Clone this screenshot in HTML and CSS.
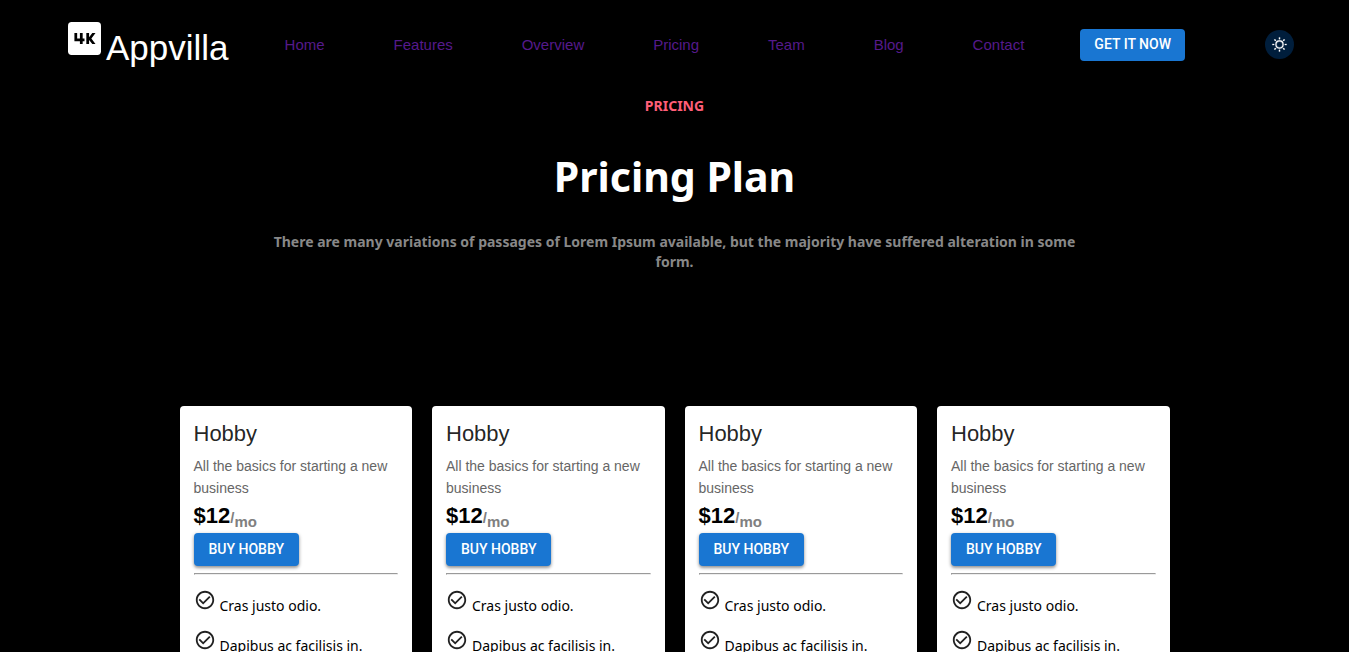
FILE: index.html
```html
<!DOCTYPE html>
<html lang="en">
<head>
<meta charset="utf-8">
<meta name="viewport" content="width=device-width, initial-scale=1">
<title>Appvilla - Pricing</title>
<link rel="stylesheet" href="styles.css">
</head>
<body>
<svg class="sprite" aria-hidden="true">
  <symbol id="check" viewBox="0 0 24 24">
    <path d="M16.59 7.58 10 14.17l-3.59-3.58L5 12l5 5 8-8zM12 2C6.48 2 2 6.48 2 12s4.48 10 10 10 10-4.480 10-10S17.520 2 12 2m0 18c-4.420 0-8-3.580-8-8s3.580-8 8-8 8 3.580 8 8-3.580 8-8 8"/>
  </symbol>
</svg>
<header class="topbar">
  <div class="brand">
    <svg class="brand-icon" viewBox="3 3 18 18" aria-hidden="true">
      <rect x="3" y="3" width="18" height="18" rx="2" fill="#fff"/>
      <path d="M12 13.500h-1V15H9.500v-1.500h-3V9H8v3h1.500V9H11v3h1zM18 15h-1.750l-1.750-2.250V15H13V9h1.500v2.250L16.250 9H18l-2.250 3z" fill="#000"/>
    </svg>
    <span class="brand-name">Appvilla</span>
  </div>
  <nav class="nav">
    <a href="#home">Home</a>
    <a href="#features">Features</a>
    <a href="#overview">Overview</a>
    <a href="#pricing">Pricing</a>
    <a href="#team">Team</a>
    <a href="#blog">Blog</a>
    <a href="#contact">Contact</a>
  </nav>
  <button class="button" type="button">GET IT NOW</button>
  <button class="theme-toggle" type="button" aria-label="Toggle theme">
    <svg viewBox="0 0 20 20" aria-hidden="true"><path fill="#fff" stroke="#fff" stroke-width=".3" d="M9.305 1.667V3.750h1.389V1.667h-1.390zm-4.707 1.950l-.982.982L5.090 6.072l.982-.982-1.473-1.473zm10.802 0L13.927 5.090l.982.982 1.473-1.473-.982-.982zM10 5.139a4.872 4.872 0 00-4.862 4.860A4.872 4.872 0 0010 14.862 4.872 4.872 0 0014.860 10 4.872 4.872 0 0010 5.139zm0 1.389A3.462 3.462 0 0113.471 10a3.462 3.462 0 01-3.473 3.472A3.462 3.462 0 016.527 10 3.462 3.462 0 0110 6.528zM1.665 9.305v1.390h2.083v-1.390H1.666zm14.583 0v1.390h2.084v-1.390h-2.084zM5.090 13.928L3.616 15.400l.982.982 1.473-1.473-.982-.982zm9.820 0l-.982.982 1.473 1.473.982-.982-1.473-1.473zM9.305 16.250v2.083h1.389V16.250h-1.390z"/></svg>
  </button>
</header>
<main>
  <section class="intro" id="pricing">
    <p class="eyebrow">PRICING</p>
    <h1 class="title">Pricing Plan</h1>
    <p class="lead">There are many variations of passages of Lorem Ipsum available, but the majority have suffered alteration in some form.</p>
  </section>
  <section class="plans">
    <article class="card">
      <h2 class="plan">Hobby</h2>
      <p class="about">All the basics for starting a new business</p>
      <p class="price">$12<span class="period">/<sub>mo</sub></span></p>
      <button class="button raised" type="button">BUY HOBBY</button>
      <hr class="rule">
      <ul class="features">
        <li><svg class="check"><use href="#check"/></svg><span>Cras justo odio.</span></li>
        <li><svg class="check"><use href="#check"/></svg><span>Dapibus ac facilisis in.</span></li>
      </ul>
    </article>
    <article class="card">
      <h2 class="plan">Hobby</h2>
      <p class="about">All the basics for starting a new business</p>
      <p class="price">$12<span class="period">/<sub>mo</sub></span></p>
      <button class="button raised" type="button">BUY HOBBY</button>
      <hr class="rule">
      <ul class="features">
        <li><svg class="check"><use href="#check"/></svg><span>Cras justo odio.</span></li>
        <li><svg class="check"><use href="#check"/></svg><span>Dapibus ac facilisis in.</span></li>
      </ul>
    </article>
    <article class="card">
      <h2 class="plan">Hobby</h2>
      <p class="about">All the basics for starting a new business</p>
      <p class="price">$12<span class="period">/<sub>mo</sub></span></p>
      <button class="button raised" type="button">BUY HOBBY</button>
      <hr class="rule">
      <ul class="features">
        <li><svg class="check"><use href="#check"/></svg><span>Cras justo odio.</span></li>
        <li><svg class="check"><use href="#check"/></svg><span>Dapibus ac facilisis in.</span></li>
      </ul>
    </article>
    <article class="card">
      <h2 class="plan">Hobby</h2>
      <p class="about">All the basics for starting a new business</p>
      <p class="price">$12<span class="period">/<sub>mo</sub></span></p>
      <button class="button raised" type="button">BUY HOBBY</button>
      <hr class="rule">
      <ul class="features">
        <li><svg class="check"><use href="#check"/></svg><span>Cras justo odio.</span></li>
        <li><svg class="check"><use href="#check"/></svg><span>Dapibus ac facilisis in.</span></li>
      </ul>
    </article>
  </section>
</main>
</body>
</html>
```
FILE: styles.css
```css
* { box-sizing: border-box; }
body {
  margin: 0;
  background: #000;
  color: #000;
  font-family: "Liberation Sans", Arial, sans-serif;
  font-size: 14px;
}
h1, h2, p, ul { margin: 0; padding: 0; }
.sprite { display: none; }

.topbar {
  display: flex;
  align-items: center;
  height: 89px;
  padding: 0 55px 0 68px;
}
.brand { display: flex; align-items: flex-start; gap: 5px; }
.brand-icon { width: 33px; height: 33px; }
.brand-name { color: #fff; font-size: 35px; line-height: 40px; padding-top: 6px; }
.nav {
  flex: 1;
  display: flex;
  justify-content: space-between;
  padding: 0 56px;
}
.nav a { color: #551a8b; font-size: 15px; line-height: 20px; text-decoration: none; }
.button {
  height: 32px;
  padding: 0 14px 2px;
  border: 0;
  border-radius: 4px;
  background: #1976d2;
  color: #fff;
  font-family: Roboto, sans-serif;
  font-size: 14px;
  font-weight: 500;
  white-space: nowrap;
}
.raised {
  height: 33px;
  padding: 0 15px 2px;
  box-shadow: 0 2px 3px rgba(0, 0, 0, .3), 0 1px 4px rgba(0, 0, 0, .2);
}
.theme-toggle {
  width: 29px;
  height: 29px;
  margin-left: 80px;
  padding: 6px;
  border: 0;
  border-radius: 50%;
  background: #001e3c;
}
.theme-toggle svg { display: block; width: 17px; height: 17px; }

.intro {
  padding: 7px 16px 0;
  text-align: center;
  font-family: "Noto Sans", "Open Sans", sans-serif;
  font-weight: 700;
}
.eyebrow { color: #ff5e78; font-size: 14px; line-height: 20px; }
.title { color: #fff; font-size: 41px; line-height: 60px; margin-top: 30px; }
.lead {
  max-width: 820px;
  margin: 26px auto 0;
  color: #888;
  font-size: 14px;
  line-height: 20px;
}

.plans {
  display: grid;
  grid-template-columns: repeat(4, 1fr);
  gap: 20px;
  max-width: 990px;
  margin: 134px auto 0;
}
.card {
  padding: 14px;
  border-radius: 4px;
  background: #fff;
}
.plan { color: rgba(0, 0, 0, .87); font-size: 22px; font-weight: 400; line-height: 28px; }
.about { margin-top: 7px; color: #666; line-height: 22px; }
.price { font-size: 22px; font-weight: 700; line-height: 34px; height: 34px; }
.period { color: #808080; font-size: 15px; }
.period sub { font-size: 15px; line-height: 0; }
.rule { margin: 7px 0 14px; }
.features {
  display: grid;
  gap: 13px;
  list-style: none;
  font-family: "Noto Sans", "Open Sans", sans-serif;
  font-size: 14px;
}
.features li { display: flex; align-items: flex-start; gap: 4px; line-height: 20px; }
.features span { padding-top: 7px; }
.check { width: 22px; height: 22px; fill: rgba(0, 0, 0, .87); }
```
